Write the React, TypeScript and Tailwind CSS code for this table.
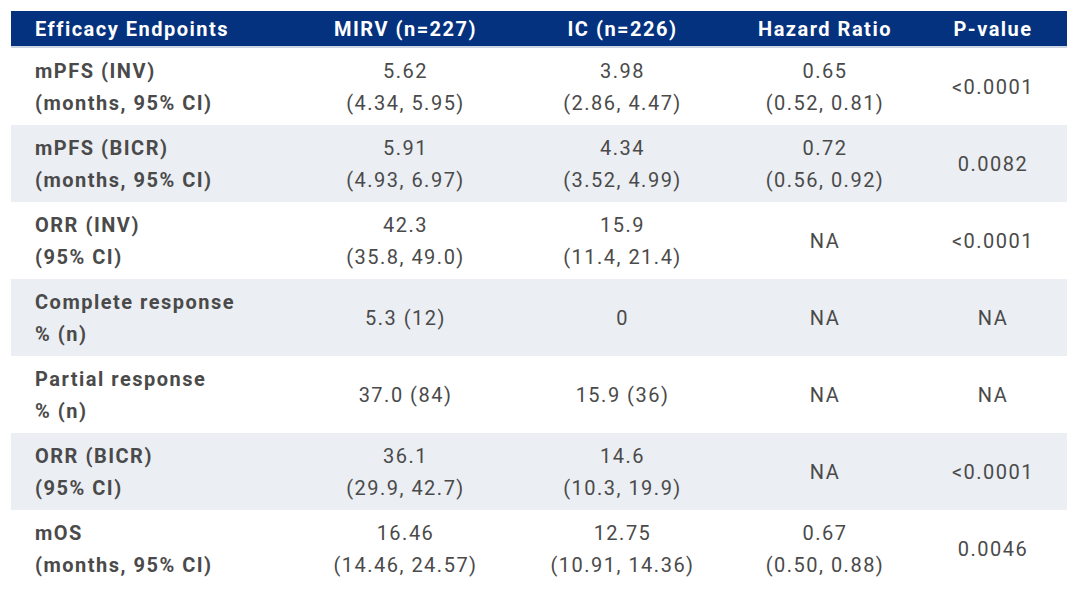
type Row = {
  label: [string, string]
  mirv: string[]
  ic: string[]
  hr: string[]
  p: string
}

const rows: Row[] = [
  { label: ["mPFS (INV)", "(months, 95% CI)"], mirv: ["5.62", "(4.34, 5.95)"], ic: ["3.98", "(2.86, 4.47)"], hr: ["0.65", "(0.52, 0.81)"], p: "<0.0001" },
  { label: ["mPFS (BICR)", "(months, 95% CI)"], mirv: ["5.91", "(4.93, 6.97)"], ic: ["4.34", "(3.52, 4.99)"], hr: ["0.72", "(0.56, 0.92)"], p: "0.0082" },
  { label: ["ORR (INV)", "(95% CI)"], mirv: ["42.3", "(35.8, 49.0)"], ic: ["15.9", "(11.4, 21.4)"], hr: ["NA"], p: "<0.0001" },
  { label: ["Complete response", "% (n)"], mirv: ["5.3 (12)"], ic: ["0"], hr: ["NA"], p: "NA" },
  { label: ["Partial response", "% (n)"], mirv: ["37.0 (84)"], ic: ["15.9 (36)"], hr: ["NA"], p: "NA" },
  { label: ["ORR (BICR)", "(95% CI)"], mirv: ["36.1", "(29.9, 42.7)"], ic: ["14.6", "(10.3, 19.9)"], hr: ["NA"], p: "<0.0001" },
  { label: ["mOS", "(months, 95% CI)"], mirv: ["16.46", "(14.46, 24.57)"], ic: ["12.75", "(10.91, 14.36)"], hr: ["0.67", "(0.50, 0.88)"], p: "0.0046" },
]

const cols = "grid grid-cols-[286px_217px_217px_188px_1fr]"

const Cell = ({ lines }: { lines: string[] }) => (
  <div className="flex flex-col items-center justify-center text-center">
    {lines.map((l, i) => (
      <span key={i}>{l}</span>
    ))}
  </div>
)

export default function App() {
  return (
    <div className="min-h-[597px] bg-white pt-[11px] pl-[11px] font-['Roboto',sans-serif] text-[20px] leading-[32px] tracking-[0.075em] text-[#4a4a4a]">
      <div className="w-[1056px]">
        <div className={`${cols} h-[37px] items-center border-b-2 border-[#cdd4e3] bg-[#04327e] font-bold text-white`}>
          <div className="pl-6">Efficacy Endpoints</div>
          <div className="text-center">MIRV (n=227)</div>
          <div className="text-center">IC (n=226)</div>
          <div className="text-center">Hazard Ratio</div>
          <div className="text-center">P-value</div>
        </div>
        {rows.map((r, i) => (
          <div key={i} className={`${cols} h-[77px] ${i % 2 === 1 ? "bg-[#ebeef3]" : "bg-white"}`}>
            <div className="flex flex-col justify-center pl-6 font-bold">
              <span>{r.label[0]}</span>
              <span>{r.label[1]}</span>
            </div>
            <Cell lines={r.mirv} />
            <Cell lines={r.ic} />
            <Cell lines={r.hr} />
            <Cell lines={[r.p]} />
          </div>
        ))}
      </div>
    </div>
  )
}
